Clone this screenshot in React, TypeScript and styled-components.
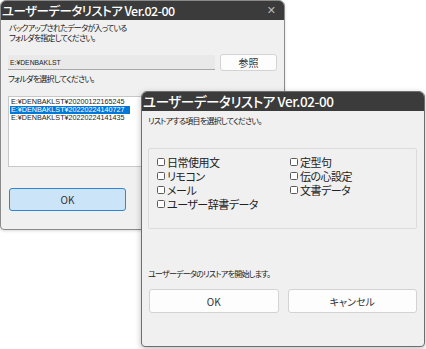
import React from "react";
import styled, { createGlobalStyle } from "styled-components";

const Global = createGlobalStyle`
  html, body { margin: 0; padding: 0; background: #ffffff; }
  body { font-family: "Noto Sans CJK JP", "Noto Sans", sans-serif; }
  * { box-sizing: border-box; }
`;

const Desktop = styled.div`
  position: relative;
  width: 426px;
  height: 349px;
  overflow: hidden;
  background: #ffffff;
`;

const Window = styled.div<{ $x: number; $y: number; $w: number; $h: number; $front?: boolean }>`
  position: absolute;
  left: ${(p) => p.$x}px;
  top: ${(p) => p.$y}px;
  width: ${(p) => p.$w}px;
  height: ${(p) => p.$h}px;
  display: flex;
  flex-direction: column;
  background: #f0f0f0;
  border: 1px solid ${(p) => (p.$front ? "#6e6e6e" : "#8a8a8a")};
  border-radius: 6px 6px 4px 4px;
  overflow: hidden;
  box-shadow: ${(p) => (p.$front ? "0 2px 6px rgba(0,0,0,0.25)" : "0 1px 3px rgba(0,0,0,0.15)")};
`;

const TitleBar = styled.div`
  height: 19px;
  flex: none;
  display: flex;
  align-items: center;
  justify-content: space-between;
  padding: 0 8px 0 1px;
  background: #3b3b3b;
  color: #ffffff;
`;

const TitleText = styled.span<{ $size: number; $ls: number }>`
  font-family: "Noto Sans CJK JP", sans-serif;
  font-size: ${(p) => p.$size}px;
  font-weight: 500;
  font-feature-settings: "palt";
  line-height: 19px;
  letter-spacing: ${(p) => p.$ls}px;
`;

const CloseX = styled.span`
  font-family: "DejaVu Sans", sans-serif;
  font-size: 11px;
  color: #b8b8b8;
  line-height: 19px;
`;

const Body = styled.div<{ $pl: number; $pr: number }>`
  flex: 1;
  display: flex;
  flex-direction: column;
  padding: 0 ${(p) => p.$pr}px 0 ${(p) => p.$pl}px;
`;

const Small = styled.div<{ $mt: number }>`
  margin-top: ${(p) => p.$mt}px;
  font-family: "Noto Sans CJK JP", sans-serif;
  font-size: 8px;
  line-height: 10px;
  letter-spacing: -0.75px;
  font-feature-settings: "palt";
  color: #1a1a1a;
  white-space: nowrap;
`;

const InputRow = styled.div`
  display: flex;
  align-items: center;
  margin-top: 11px;
  gap: 5px;
`;

const PathInput = styled.div`
  width: 208px;
  height: 15px;
  background: #e9e9e9;
  border-bottom: 1px solid #a8a8a8;
  border-radius: 2px 2px 0 0;
  padding-left: 2px;
  font-family: "Liberation Sans", sans-serif;
  font-size: 6.8px;
  line-height: 15px;
  color: #222;
`;

const Btn = styled.div<{ $w: number; $h: number; $primary?: boolean }>`
  width: ${(p) => p.$w}px;
  height: ${(p) => p.$h}px;
  display: flex;
  align-items: center;
  justify-content: center;
  background: ${(p) => (p.$primary ? "#cce4f7" : "#fdfdfd")};
  border: 1px solid ${(p) => (p.$primary ? "#2f86d6" : "#d3d3d3")};
  border-radius: 3px;
  font-family: "Noto Sans CJK JP", "Liberation Sans", sans-serif;
  font-size: 10px;
  color: #333;
  font-feature-settings: "palt";
`;

const ListBox = styled.div`
  margin-top: 12px;
  width: 208px;
  height: 71px;
  background: #ffffff;
  border: 1px solid #c8c8c8;
  padding: 1px 0 0 1px;
`;

const ListItem = styled.div<{ $sel?: boolean }>`
  height: 8px;
  width: 120px;
  font-family: "Liberation Sans", sans-serif;
  font-size: 7.2px;
  line-height: 8px;
  padding-left: 1px;
  white-space: nowrap;
  background: ${(p) => (p.$sel ? "#0078d7" : "transparent")};
  color: ${(p) => (p.$sel ? "#ffffff" : "#222")};
`;

const ButtonRow = styled.div<{ $mt: number }>`
  margin-top: ${(p) => p.$mt}px;
  display: flex;
  gap: 9px;
`;

const Group = styled.div`
  margin-top: 22px;
  height: 81px;
  border: 1px solid #dcdcdc;
  border-radius: 2px;
  padding: 6px 0 0 8px;
  display: grid;
  grid-template-columns: 133px 1fr;
  grid-auto-rows: 14px;
`;

const Check = styled.label`
  display: flex;
  align-items: center;
  gap: 2px;
  font-family: "Noto Sans CJK JP", sans-serif;
  font-size: 11px;
  letter-spacing: -0.5px;
  font-feature-settings: "palt";
  color: #222;
  white-space: nowrap;
  line-height: 14px;
`;

const Box = styled.span`
  width: 8px;
  height: 8px;
  border: 1px solid #5a5a5a;
  border-radius: 1.5px;
  background: #ffffff;
  flex: none;
`;

const items: [string, string | null][] = [
  ["日常使用文", "定型句"],
  ["リモコン", "伝の心設定"],
  ["メール", "文書データ"],
  ["ユーザー辞書データ", null],
];

export default function App() {
  return (
    <Desktop>
      <Global />
      <Window $x={0} $y={0} $w={285} $h={230}>
        <TitleBar>
          <TitleText $size={12.5} $ls={-0.55}>ユーザーデータリストア Ver.02-00</TitleText>
          <CloseX>✕</CloseX>
        </TitleBar>
        <Body $pl={7} $pr={7}>
          <Small $mt={3} style={{ paddingLeft: 1 }}>
            バックアップされたデータが入っている
            <br />
            フォルダを指定してください。
          </Small>
          <InputRow>
            <PathInput>E:¥DENBAKLST</PathInput>
            <Btn $w={57} $h={17}>参照</Btn>
          </InputRow>
          <Small $mt={3}>フォルダを選択してください。</Small>
          <ListBox>
            <ListItem>E:¥DENBAKLST¥20200122165245</ListItem>
            <ListItem $sel>E:¥DENBAKLST¥20220224140727</ListItem>
            <ListItem>E:¥DENBAKLST¥20220224141435</ListItem>
          </ListBox>
          <ButtonRow $mt={21}>
            <Btn $w={117} $h={23} $primary style={{ marginLeft: 1 }}>OK</Btn>
          </ButtonRow>
        </Body>
      </Window>

      <Window $x={141} $y={91} $w={284} $h={256} $front>
        <TitleBar>
          <TitleText $size={13.5} $ls={-0.4}>ユーザーデータリストア Ver.02-00</TitleText>
        </TitleBar>
        <Body $pl={6} $pr={7}>
          <Small $mt={5}>リストアする項目を選択してください。</Small>
          <Group>
            {items.flatMap(([a, b], i) => [
              <Check key={`a${i}`}>
                <Box />
                {a}
              </Check>,
              b ? (
                <Check key={`b${i}`}>
                  <Box />
                  {b}
                </Check>
              ) : (
                <span key={`b${i}`} />
              ),
            ])}
          </Group>
          <Small $mt={40}>ユーザーデータのリストアを開始します。</Small>
          <ButtonRow $mt={10}>
            <Btn $w={130} $h={24} style={{ marginLeft: 1 }}>OK</Btn>
            <Btn $w={130} $h={24}>キャンセル</Btn>
          </ButtonRow>
        </Body>
      </Window>
    </Desktop>
  );
}
